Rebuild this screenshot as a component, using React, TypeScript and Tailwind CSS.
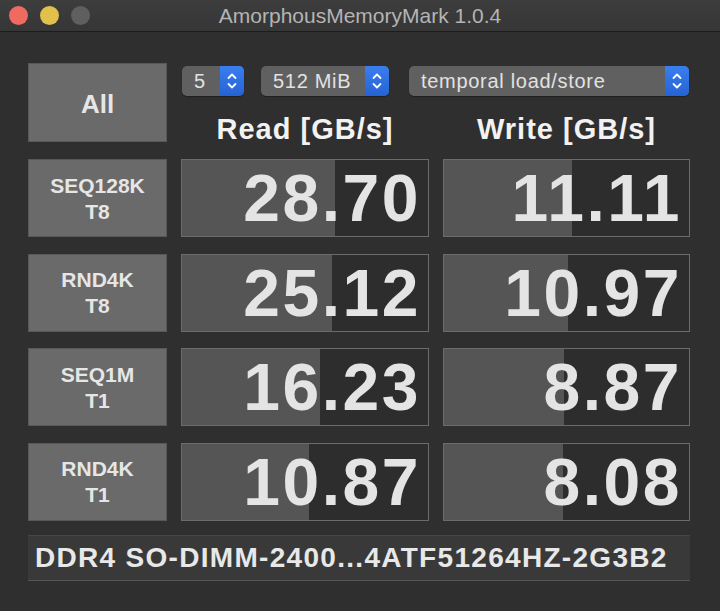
import React from "react";

const rows = [
  { name: "SEQ128K", threads: "T8", read: "28.70", write: "11.11", readPct: 62, writePct: 52.2 },
  { name: "RND4K", threads: "T8", read: "25.12", write: "10.97", readPct: 60.9, writePct: 50.6 },
  { name: "SEQ1M", threads: "T1", read: "16.23", write: "8.87", readPct: 56, writePct: 49 },
  { name: "RND4K", threads: "T1", read: "10.87", write: "8.08", readPct: 51.6, writePct: 48.6 },
];

function Stepper() {
  return (
    <div className="flex w-[24px] items-center justify-center self-stretch rounded-r-[5px] bg-gradient-to-b from-[#3a7ef0] to-[#2563d3]">
      <svg width="12" height="20" viewBox="0 0 12 20" fill="none" stroke="#ffffff" strokeWidth="1.8" strokeLinecap="round" strokeLinejoin="round">
        <path d="M2.5 7 L6 3.5 L9.5 7" />
        <path d="M2.5 13 L6 16.5 L9.5 13" />
      </svg>
    </div>
  );
}

function Select({ value, width }: { value: string; width: string }) {
  return (
    <div className={`flex h-[30px] ${width} items-stretch rounded-[5px] bg-[#606060] shadow-[0_1px_1px_rgba(0,0,0,0.35)]`}>
      <span className="flex flex-1 items-center pl-[12px] text-[20px] tracking-[0.7px] text-[#e2e2e2]">{value}</span>
      <Stepper />
    </div>
  );
}

function Score({ value, pct }: { value: string; pct: number }) {
  return (
    <div className="relative h-[78px] border border-[#6b6b6b] bg-[#2d2d2d]">
      <div className="absolute inset-y-0 left-0 bg-[#555555]" style={{ width: `${pct}%` }} />
      <div className="relative flex h-full items-center justify-end pr-[7px] text-[66px] font-bold leading-none tracking-[2.5px] text-[#e4e4e4]">
        {value}
      </div>
    </div>
  );
}

export default function App() {
  return (
    <div className="h-[611px] w-[720px] overflow-hidden bg-[#2f2f2f] font-['Liberation_Sans',Arial,sans-serif]">
      <div className="relative flex h-[32px] items-center border-b border-[#1c1c1c] bg-gradient-to-b from-[#3d3d3d] to-[#363636]">
        <div className="absolute left-[9px] flex gap-[12px]">
          <span className="h-[19px] w-[19px] rounded-full bg-[#ef6a5f]" />
          <span className="h-[19px] w-[19px] rounded-full bg-[#e2c04c]" />
          <span className="h-[19px] w-[19px] rounded-full bg-[#5f5f5f]" />
        </div>
        <div className="flex-1 text-center text-[21px] text-[#b4b4b4]">AmorphousMemoryMark 1.0.4</div>
      </div>

      <div className="pl-[28px] pt-[31px]">
        <div className="grid grid-cols-[139px_248px_247px] gap-x-[14px]">
          <div className="flex h-[79px] items-center justify-center border border-[#585858] bg-[#6a6a6a] pt-[3px] text-[26px] font-bold text-[#e6e6e6]">
            All
          </div>
          <div className="col-span-2 flex flex-col">
            <div className="mt-[3px] flex gap-[17px] pl-[1px]">
              <Select value="5" width="w-[62px]" />
              <Select value="512 MiB" width="w-[128px]" />
              <div className="ml-[3px]">
                <Select value="temporal load/store" width="w-[280px]" />
              </div>
            </div>
            <div className="mt-[19px] grid grid-cols-[248px_247px] gap-x-[14px] text-[29px] font-bold leading-none tracking-[1px] text-[#f2f2f2]">
              <div className="text-center">Read [GB/s]</div>
              <div className="text-center">Write [GB/s]</div>
            </div>
          </div>
        </div>

        <div className="mt-[15px] grid grid-cols-[139px_248px_247px] gap-x-[14px] gap-y-[16.5px]">
          {rows.map((r, i) => (
            <React.Fragment key={i}>
              <div className="flex h-[78px] flex-col items-center justify-center border border-[#585858] bg-[#6a6a6a] pt-[1px] text-[21px] font-bold leading-[26px] text-[#e6e6e6]">
                <span>{r.name}</span>
                <span>{r.threads}</span>
              </div>
              <Score value={r.read} pct={r.readPct} />
              <Score value={r.write} pct={r.writePct} />
            </React.Fragment>
          ))}
        </div>

        <div className="mt-[14px] flex h-[46px] w-[662px] items-center border-b border-t border-[#464646] border-b-[#555555] bg-[#393939] pl-[7px] text-[28px] font-bold tracking-[1.3px] text-[#e8e8e8]">
          DDR4 SO-DIMM-2400...4ATF51264HZ-2G3B2
        </div>
      </div>
    </div>
  );
}
